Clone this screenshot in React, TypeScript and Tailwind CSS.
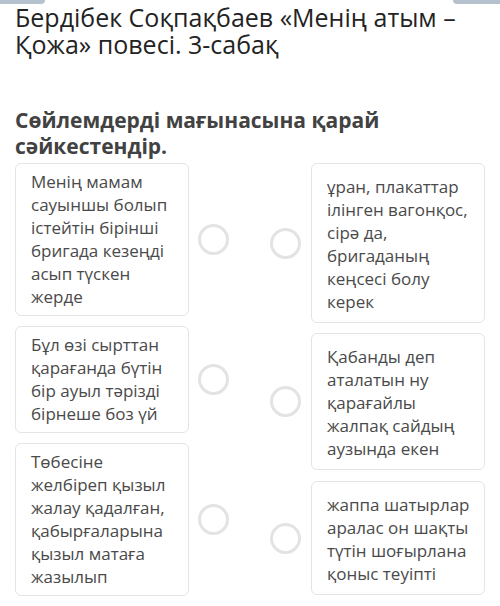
import React from "react";

const leftItems = [
  ["Менің мамам", "сауыншы болып", "істейтін бірінші", "бригада кезеңді", "асып түскен", "жерде"],
  ["Бұл өзі сырттан", "қарағанда бүтін", "бір ауыл тәрізді", "бірнеше боз үй"],
  ["Төбесіне", "желбіреп қызыл", "жалау қадалған,", "қабырғаларына", "қызыл матаға", "жазылып"],
];

const rightItems = [
  ["ұран, плакаттар", "ілінген вагонқос,", "сірә да,", "бригаданың", "кеңсесі болу", "керек"],
  ["Қабанды деп", "аталатын ну", "қарағайлы", "жалпақ сайдың", "аузында екен"],
  ["жаппа шатырлар", "аралас он шақты", "түтін шоғырлана", "қоныс теуіпті"],
];

function Lines({ lines }: { lines: string[] }) {
  return (
    <>
      {lines.map((l, i) => (
        <div key={i} className="whitespace-nowrap">
          {l}
        </div>
      ))}
    </>
  );
}

function Circle() {
  return <div className="w-[31px] h-[31px] shrink-0 rounded-full border-[3px] border-[#e3e3e3] bg-white" />;
}

export default function App() {
  return (
    <div
      className="w-[500px] h-[606px] bg-white overflow-hidden"
      style={{ fontFamily: '"Open Sans", "Noto Sans", sans-serif' }}
    >
      <div className="flex justify-between h-[4px]">
        <div className="w-[45px] h-[4px] bg-[#b5c1cd] rounded-br-[4px]" />
        <div className="w-[47px] h-[4px] bg-[#b5c1cd] rounded-bl-[4px]" />
      </div>
      <div className="px-[15px]">
        <h1 className="text-[25px] leading-[27px] text-[#232323] font-normal">
          Бердібек Соқпақбаев «Менің атым –<br />Қожа» повесі. 3-сабақ
        </h1>
        <h2 className="mt-[49px] text-[21px] leading-[26px] font-bold text-[#424242]">
          Сөйлемдерді мағынасына қарай<br />сәйкестендір.
        </h2>
        <div className="mt-[4px] flex justify-between text-[17px] leading-[23px] text-[#4a4a4a]">
          <div className="flex flex-col gap-[10px]">
            {leftItems.map((lines, i) => (
              <div key={i} className="flex items-center gap-[9px]">
                <div className="w-[174px] rounded-[6px] border border-[#e4e4e4] bg-white px-[15px] pt-[6px] pb-[7px]">
                  <Lines lines={lines} />
                </div>
                <Circle />
              </div>
            ))}
          </div>
          <div className="flex flex-col gap-[10px]">
            {rightItems.map((lines, i) => (
              <div key={i} className={"flex items-center gap-[10px]" + (i === 2 ? " mt-[1px]" : "")}>
                <Circle />
                <div className="w-[174px] rounded-[6px] border border-[#e4e4e4] bg-white px-[15px] pt-[11px] pb-[9px]">
                  <Lines lines={lines} />
                </div>
              </div>
            ))}
          </div>
        </div>
      </div>
    </div>
  );
}
